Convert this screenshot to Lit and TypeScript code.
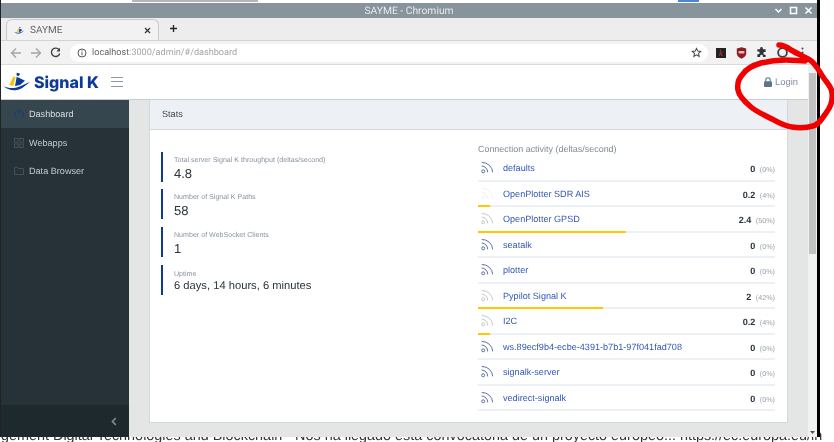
import { LitElement, css, html, svg } from "lit";
import { customElement } from "lit/decorators.js";

type Conn = { name: string; value: string; pct: number; tone?: string };

const conns: Conn[] = [
  { name: "defaults", value: "0", pct: 0 },
  { name: "OpenPlotter SDR AIS", value: "0.2", pct: 4, tone: "faint" },
  { name: "OpenPlotter GPSD", value: "2.4", pct: 50, tone: "live" },
  { name: "seatalk", value: "0", pct: 0 },
  { name: "plotter", value: "0", pct: 0 },
  { name: "Pypilot Signal K", value: "2", pct: 42, tone: "live" },
  { name: "I2C", value: "0.2", pct: 4, tone: "live" },
  { name: "ws.89ecf9b4-ecbe-4391-b7b1-97f041fad708", value: "0", pct: 0 },
  { name: "signalk-server", value: "0", pct: 0 },
  { name: "vedirect-signalk", value: "0", pct: 0 },
];

const stats = [
  { label: "Total server Signal K throughput (deltas/second)", value: "4.8" },
  { label: "Number of Signal K Paths", value: "58" },
  { label: "Number of WebSocket Clients", value: "1" },
  { label: "Uptime", value: "6 days, 14 hours, 6 minutes", small: true },
];

const rss = svg`<circle cx="2.200" cy="9.300" r="1.500" fill="none" stroke="currentColor" stroke-width=".9"/>
  <path d="M.7 4a6.300 6.300 0 0 1 6 6.400M.7 .5a10.500 10.500 0 0 1 11 9.900" fill="none" stroke="currentColor" stroke-width=".9"/>`;

const logo = (w: number, h: number) => html`<svg width=${w} height=${h} viewBox="0 0 30 24">
  <path d="M14.700 2.700L18 3.400 17 6 14.500 5.500z" fill="#0b3a9a"/>
  <path d="M7.300 15l4-8.300h2.400L11.300 16z" fill="#f6c400"/>
  <path d="M14.700 6.700L23 10.700 18 15l-5 1z" fill="#0b3a9a"/>
  <path d="M1.300 16c4 2.200 9 2.600 13.400 1.500 5-1.300 9-4 13.300-5.800-3.600 3-7.500 7-13 8.300-5 1-10.500-.8-13.700-4z" fill="#0b3a9a"/>
</svg>`;

@customElement("app-root")
export class AppRoot extends LitElement {
  render() {
    return html`
      <div class="desktop">
        <div class="behind">gement Digital Technologies and Blockchain - Nos ha llegado esta convocatoria de un proyecto europeo... https://ec.europa.eu/in</div>
        <div class="window">
          <div class="titlebar">
            <span class="title">SAYME - Chromium</span>
            <div class="winbtns">
              <svg width="9" height="9" viewBox="0 0 9 9"><path d="M1.500 3l3 3 3-3" fill="none" stroke="#fff" stroke-width="1.500"/></svg>
              <svg width="9" height="9" viewBox="0 0 9 9"><rect x="1.500" y="1.500" width="6" height="6" fill="none" stroke="#fff" stroke-width="1.500"/></svg>
              <svg width="9" height="9" viewBox="0 0 9 9"><path d="M1.500 1.500l6 6m0-6l-6 6" fill="none" stroke="#fff" stroke-width="1.500"/></svg>
            </div>
          </div>
          <div class="tabstrip">
            <div class="tab">
              ${logo(11, 9)}
              <span class="tabname">SAYME</span>
              <svg class="tabx" width="7" height="7" viewBox="0 0 7 7"><path d="M1 1l5 5m0-5l-5 5" stroke="#333" stroke-width="1.200"/></svg>
            </div>
            <svg class="newtab" width="9" height="9" viewBox="0 0 9 9"><path d="M4.500 1v7M1 4.500h7" stroke="#222" stroke-width="1.300"/></svg>
          </div>
          <div class="toolbar">
            <svg width="12" height="12" viewBox="0 0 12 12"><path d="M11 6H2M6 1.500L1.500 6 6 10.500" fill="none" stroke="#a3a6a8" stroke-width="1.400"/></svg>
            <svg width="12" height="12" viewBox="0 0 12 12"><path d="M1 6h9M6 1.500L10.500 6 6 10.500" fill="none" stroke="#a3a6a8" stroke-width="1.400"/></svg>
            <svg width="11" height="11" viewBox="0 0 11 11"><path d="M9.300 3.200A4.200 4.200 0 1 0 9.700 6.500" fill="none" stroke="#444" stroke-width="1.400"/><path d="M10 .8v3.600H6.400z" fill="#444"/></svg>
            <div class="omnibox">
              <svg width="10" height="10" viewBox="0 0 10 10"><circle cx="5" cy="5" r="4" fill="none" stroke="#555" stroke-width="1"/><path d="M5 4.300v3M5 2.500v1" stroke="#555" stroke-width="1"/></svg>
              <span class="url"><b>localhost</b>:3000/admin/#/dashboard</span>
              <svg class="star" width="11" height="11" viewBox="0 0 24 24"><path d="M12 3l2.800 6 6.500.7-4.900 4.400 1.400 6.500L12 17.300l-5.800 3.300 1.400-6.500-4.900-4.400L9.200 9z" fill="none" stroke="#444" stroke-width="2.200"/></svg>
            </div>
            <div class="exts">
              <span class="ext-k">k</span>
              <svg width="11" height="12" viewBox="0 0 11 12"><path d="M.8 1.500L5.500.3l4.700 1.200v5c0 2.500-2.500 4.200-4.700 5.200C3.300 10.700.8 9 .8 6.500z" fill="#8f1d22"/><rect x="2.500" y="4" width="6" height="2.500" rx="1" fill="#e8b9ba"/></svg>
              <svg width="11" height="11" viewBox="0 0 24 24"><path d="M9 3a3 3 0 0 1 6 0v2h6v6h-2a3 3 0 0 0 0 6h2v5h-6v-2a3 3 0 0 0-6 0v2H3v-6h2a3 3 0 0 0 0-6H3V5h6z" fill="#333"/></svg>
              <svg width="11" height="11" viewBox="0 0 11 11"><circle cx="5.500" cy="5.500" r="4.400" fill="none" stroke="#3a4144" stroke-width="1.800"/></svg>
              <svg class="dots" width="3" height="11" viewBox="0 0 3 11"><circle cx="1.500" cy="1.500" r="1" fill="#444"/><circle cx="1.500" cy="5.500" r="1" fill="#444"/><circle cx="1.500" cy="9.500" r="1" fill="#444"/></svg>
            </div>
          </div>
          <div class="page">
            <div class="app">
              <header class="appbar">
                <div class="brand">
                  ${logo(30, 24)}
                  <span class="brandname">Signal K</span>
                </div>
                <div class="burger"><i></i><i></i><i></i></div>
                <div class="login">
                  <svg width="8" height="10" viewBox="0 0 8 10"><path d="M1.800 4.500V3a2.200 2.200 0 0 1 4.400 0v1.500" fill="none" stroke="#5f7488" stroke-width="1.100"/><rect y="4.200" width="8" height="5.800" rx="1" fill="#5f7488"/></svg>
                  Login
                </div>
              </header>
              <div class="body">
                <nav class="sidebar">
                  <a class="navitem active">
                    <svg class="navicon" width="10" height="10" viewBox="0 0 10 10"><path d="M2 8.600A4.300 4.300 0 1 1 8 8.600M5 5l1-2.400" fill="none" stroke="#123a84" stroke-width="1"/></svg>
                    Dashboard
                  </a>
                  <a class="navitem">
                    <svg class="navicon" width="10" height="10" viewBox="0 0 10 10"><g fill="none" stroke="#465359" stroke-width=".9"><rect x=".5" y=".5" width="3.600" height="3.600"/><rect x="5.900" y=".5" width="3.600" height="3.600"/><rect x=".5" y="5.900" width="3.600" height="3.600"/><rect x="5.900" y="5.900" width="3.600" height="3.600"/></g></svg>
                    Webapps
                  </a>
                  <a class="navitem">
                    <svg class="navicon" width="10" height="10" viewBox="0 0 10 10"><path d="M.5 8.500v-7h3l1 1h5v6z" fill="none" stroke="#465359" stroke-width=".9"/></svg>
                    Data Browser
                  </a>
                  <div class="minimizer">
                    <svg width="6" height="9" viewBox="0 0 6 9"><path d="M4.800 1L1.500 4.500l3.300 3.500" fill="none" stroke="#7b878e" stroke-width="1.800"/></svg>
                  </div>
                </nav>
                <main class="main">
                  <section class="card">
                    <div class="cardhead">Stats</div>
                    <div class="cardbody">
                      <div class="stats">
                        ${stats.map(
                          (s) => html`<div class="callout">
                            <small>${s.label}</small>
                            <strong class=${s.small ? "small" : ""}>${s.value}</strong>
                          </div>`
                        )}
                      </div>
                      <div class="conns">
                        <div class="connhead">Connection activity (deltas/second)</div>
                        ${conns.map(
                          (c) => html`<div class="conn">
                            <div class="connrow">
                              <svg class="rss ${c.tone ?? ""}" width="12" height="12" viewBox="0 0 12 12">${rss}</svg>
                              <span class="connname">${c.name}</span>
                              <span class="connval"><b>${c.value}</b> <small>(${c.pct}%)</small></span>
                            </div>
                            <div class="track"><div class="fill" style="width:${c.pct}%"></div></div>
                          </div>`
                        )}
                      </div>
                    </div>
                  </section>
                </main>
              </div>
            </div>
            <div class="scroll">
              <div class="thumb"></div>
              <svg class="down" width="5" height="3" viewBox="0 0 5 3"><path d="M0 0h5L2.500 3z" fill="#505050"/></svg>
            </div>
          </div>
        </div>
        <div class="edge"></div>
        <div class="strip grey"></div>
        <div class="strip blue"></div>
        <svg class="scribble" width="834" height="442" viewBox="0 0 834 442">
          <path d="M779 45c4 0 8 2 12 5 7 4 14 7 19 10 6 4 9 11 13 17 4 6 9 10 9 16 1 8-2 15-6 20-4 6-8 12-13 13-7 2-14 2-21 1-8-1-13-4-20-8-8-4-15-7-21-12-6-5-12-11-13-17-1-6 1-12 5-16 4-6 11-9 18-11 8-2 16-3 25-3 8 0 13 1 19 1" fill="none" stroke="#f00000" stroke-width="5.500" stroke-linecap="round" stroke-linejoin="round"/>
        </svg>
      </div>
    `;
  }

  static styles = css`
    :host {
      display: block;
      width: 834px;
      height: 442px;
      overflow: hidden;
      font-family: "Liberation Sans", Arial, sans-serif;
      text-rendering: geometricPrecision;
    }
    .desktop {
      position: relative;
      width: 834px;
      height: 442px;
      background: #fff;
      overflow: hidden;
      filter: blur(0.3px);
    }
    .window {
      position: relative;
      width: 817px;
      height: 437px;
      padding-top: 3px;
      box-sizing: border-box;
      display: flex;
      flex-direction: column;
      background: #fff;
      border-left: 1px solid #222;
    }
    .titlebar {
      height: 15px;
      flex: none;
      background: #87949b;
      display: flex;
      align-items: center;
      justify-content: center;
      position: relative;
      color: #e6eaec;
      font: 10.300px "Roboto", sans-serif;
    }
    .winbtns {
      position: absolute;
      right: 4px;
      top: 3px;
      display: flex;
      gap: 6px;
    }
    .tabstrip {
      height: 23px;
      flex: none;
      background: #ededed;
      display: flex;
      align-items: flex-end;
      border-bottom: 1px solid #d0d2d3;
      box-sizing: border-box;
      gap: 10px;
    }
    .tab {
      width: 153px;
      height: 21px;
      margin-left: 5px;
      box-sizing: border-box;
      background: #f2f2f2;
      border: 1px solid #c6c8c9;
      border-bottom: 0;
      border-radius: 6px 6px 0 0;
      display: flex;
      align-items: center;
      padding: 0 7px;
      gap: 5px;
      font: 10px "Roboto", sans-serif;
      color: #666;
    }
    .tabname {
      flex: 1;
    }
    .newtab {
      margin-bottom: 7px;
    }
    .toolbar {
      height: 24px;
      flex: none;
      background: #f2f2f2;
      display: flex;
      align-items: center;
      gap: 8px;
      padding-left: 9px;
      box-sizing: border-box;
      border-bottom: 1px solid #d8dadb;
    }
    .omnibox {
      width: 638px;
      height: 18px;
      margin-left: 1px;
      background: #fff;
      border-radius: 9px;
      display: flex;
      align-items: center;
      padding: 0 6px 0 7px;
      box-sizing: border-box;
      gap: 5px;
    }
    .url {
      flex: 1;
      font: 9.100px "Roboto", sans-serif;
      color: #a5a5a5;
    }
    .url b {
      font-weight: 400;
      color: #666;
    }
    .exts {
      display: flex;
      align-items: center;
      gap: 9.500px;
    }
    .ext-k {
      width: 10px;
      height: 10px;
      background: #222;
      color: #c33;
      font: italic 9px/10px "Liberation Serif", serif;
      text-align: center;
    }
    .dots {
      margin-left: 4px;
    }
    .page {
      flex: 1;
      min-height: 0;
      display: flex;
      background: #fff;
    }
    .app {
      flex: 1;
      min-width: 0;
      display: flex;
      flex-direction: column;
    }
    .appbar {
      height: 34.500px;
      flex: none;
      box-sizing: border-box;
      background: #fff;
      border-bottom: 1px solid #c8ced3;
      display: flex;
      align-items: center;
      padding: 0 10px 0 1px;
    }
    .brand {
      display: flex;
      align-items: center;
      gap: 2px;
      width: 98px;
    }
    .brandname {
      font: 800 16px "Inter", "Liberation Sans", sans-serif;
      color: #0b3a9a;
      white-space: nowrap;
    }
    .burger {
      margin-left: 11px;
      width: 12px;
      display: flex;
      flex-direction: column;
      gap: 3.500px;
    }
    .burger i {
      height: 1px;
      background: #8a99a3;
    }
    .login {
      margin-left: auto;
      display: flex;
      align-items: center;
      gap: 3px;
      color: #7d8f9f;
      font-size: 9.400px;
    }
    .body {
      flex: 1;
      min-height: 0;
      display: flex;
    }
    .sidebar {
      width: 128px;
      flex: none;
      background: #263238;
      display: flex;
      flex-direction: column;
    }
    .navitem {
      height: 28.700px;
      display: flex;
      align-items: center;
      gap: 5px;
      padding-left: 13px;
      color: #c4cacd;
      font-size: 9.100px;
      box-sizing: border-box;
    }
    .active {
      background: #36464e;
      color: #d8dcde;
    }
    .minimizer {
      margin-top: auto;
      height: 32px;
      background: #1e292e;
      display: flex;
      align-items: center;
      justify-content: flex-end;
      padding-right: 12px;
      box-sizing: border-box;
    }
    .main {
      flex: 1;
      min-width: 0;
      padding: 0 20px;
      background: #e4e6e6;
    }
    .card {
      background: #fff;
      border: 1px solid #d3d8dc;
      border-top: 0;
      height: 323.500px;
      box-sizing: border-box;
    }
    .cardhead {
      height: 30.500px;
      box-sizing: border-box;
      background: #edf0f5;
      border-bottom: 1px solid #d3d8dc;
      display: flex;
      align-items: center;
      padding-left: 12px;
      font-size: 9.100px;
      color: #3b4650;
    }
    .cardbody {
      display: flex;
      padding: 14px 12px 10px 11px;
    }
    .stats {
      width: 318px;
      padding-top: 7.500px;
      display: flex;
      flex-direction: column;
      gap: 7.700px;
    }
    .callout {
      border-left: 2px solid #0b3a9a;
      padding: 3px 0 0 11px;
      height: 30px;
      box-sizing: border-box;
      display: flex;
      flex-direction: column;
      justify-content: center;
    }
    .callout small {
      font-size: 7.100px;
      color: #8793a0;
    }
    .callout strong {
      font-weight: 400;
      font-size: 13px;
      color: #29363d;
      margin-top: 2px;
    }
    .callout strong.small {
      font-size: 11.200px;
    }
    .conns {
      width: 298px;
    }
    .connhead {
      color: #7f8b96;
      font-size: 8.950px;
      margin-bottom: 3px;
    }
    .conn {
      height: 25.500px;
    }
    .connrow {
      height: 22.500px;
      display: flex;
      align-items: center;
    }
    .rss {
      color: #48639f;
      flex: none;
      margin: 0 10px 0 3px;
    }
    .rss.live {
      color: #bcc2c7;
    }
    .rss.faint {
      color: #eef0f1;
    }
    .connname {
      flex: 1;
      color: #3358b4;
      font-size: 9.100px;
    }
    .connval b {
      color: #29363d;
      font-size: 9.100px;
    }
    .connval small {
      color: #9aa3ab;
      font-size: 7.200px;
    }
    .track {
      height: 2px;
      background: #edf0f5;
    }
    .fill {
      height: 2px;
      background: #ffc800;
    }
    .scroll {
      width: 9px;
      flex: none;
      background: #f1f1f1;
      box-sizing: border-box;
      padding-top: 8px;
      display: flex;
      flex-direction: column;
      align-items: center;
    }
    .thumb {
      width: 7px;
      height: 181px;
      background: #c1c1c1;
    }
    .down {
      margin-top: auto;
      margin-bottom: 3px;
    }
    .edge {
      position: absolute;
      left: 817px;
      top: 0;
      width: 3px;
      height: 437px;
      background: #000;
    }
    .behind {
      position: absolute;
      left: 1px;
      top: 428px;
      white-space: nowrap;
      font-size: 14.400px;
      color: #333;
    }
    .strip {
      position: absolute;
      top: 0;
      height: 2px;
    }
    .strip.grey {
      left: 132px;
      width: 126px;
      background: #b5b5b5;
    }
    .strip.blue {
      left: 678px;
      width: 21px;
      background: #4a86d8;
    }
    .scribble {
      position: absolute;
      inset: 0;
      pointer-events: none;
    }
  `;
}
